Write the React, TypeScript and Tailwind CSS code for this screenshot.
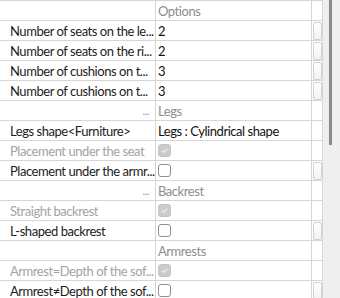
import React from 'react';

type Row =
  | { kind: 'header'; text: string; dots?: boolean }
  | { kind: 'value'; label: string; value: string; btn?: boolean }
  | { kind: 'check'; label: string; checked: boolean; disabled?: boolean; btn?: boolean };

const rows: Row[] = [
  { kind: 'header', text: 'Options' },
  { kind: 'value', label: 'Number of seats on the le...', value: '2', btn: true },
  { kind: 'value', label: 'Number of seats on the ri...', value: '2', btn: true },
  { kind: 'value', label: 'Number of cushions on t...', value: '3', btn: true },
  { kind: 'value', label: 'Number of cushions on t...', value: '3', btn: true },
  { kind: 'header', text: 'Legs', dots: true },
  { kind: 'value', label: 'Legs shape<Furniture>', value: 'Legs : Cylindrical shape' },
  { kind: 'check', label: 'Placement under the seat', checked: true, disabled: true },
  { kind: 'check', label: 'Placement under the armr...', checked: false, btn: true },
  { kind: 'header', text: 'Backrest', dots: true },
  { kind: 'check', label: 'Straight backrest', checked: true, disabled: true },
  { kind: 'check', label: 'L-shaped backrest', checked: false, btn: true },
  { kind: 'header', text: 'Armrests' },
  { kind: 'check', label: 'Armrest=Depth of the sof...', checked: true, disabled: true },
  { kind: 'check', label: 'Armrest\u2260Depth of the sof...', checked: false, btn: true },
];

function CheckBox({ checked, disabled }: { checked: boolean; disabled?: boolean }) {
  if (checked) {
    return (
      <span className="flex h-[13px] w-[13px] items-center justify-center rounded-[3px] border border-[#c4c4c4] bg-[#cbcbcb]">
        <svg width="9" height="9" viewBox="0 0 9 9">
          <path d="M1.8 4.6 L3.6 6.4 L7.2 2.6" fill="none" stroke="#eeeeee" strokeWidth="1.2" />
        </svg>
      </span>
    );
  }
  return (
    <span
      className={
        'block h-[13px] w-[13px] rounded-[3px] border bg-white ' +
        (disabled ? 'border-[#c4c4c4]' : 'border-[#8f8f8f]')
      }
    />
  );
}

function App() {
  return (
    <div
      className="flex h-[298px] w-[340px] overflow-hidden bg-white text-[13px] leading-[18px] tracking-[-0.45px]"
      style={{ fontFamily: 'Lato, "Noto Sans", sans-serif' }}
    >
      <div className="w-[323px] border-t border-[#d6d6d6]">
        {rows.map((r, i) => (
          <div key={i} className="flex h-[20px] border-b border-[#d6d6d6]">
            <div className="flex w-[156px] items-center whitespace-nowrap border-r border-[#d6d6d6] pl-[10px] pr-[2px]">
              {r.kind === 'header' ? (
                r.dots ? <span className="ml-auto pr-[4px] text-[11px] text-[#9a9a9a]">...</span> : null
              ) : (
                <span
                  className={
                    r.kind === 'check' && r.disabled ? 'text-[#a3a3a3]' : 'text-[#1c1c1c]'
                  }
                >
                  {r.label}
                </span>
              )}
            </div>
            <div className="flex w-[156px] items-center whitespace-nowrap border-r border-[#d6d6d6] pl-[2px]">
              {r.kind === 'header' && <span className="text-[#8e8e8e]">{r.text}</span>}
              {r.kind === 'value' && <span className="text-[#111111]">{r.value}</span>}
              {r.kind === 'check' && <CheckBox checked={r.checked} disabled={r.disabled} />}
            </div>
            <div className="flex w-[11px] items-center justify-center border-r border-[#d6d6d6]">
              {r.kind !== 'header' && r.btn && (
                <span className="block h-[18px] w-[9px] rounded-[2px] border border-[#d2d2d2] bg-gradient-to-b from-white to-[#f2f2f2]" />
              )}
            </div>
          </div>
        ))}
      </div>
      <div className="flex w-[17px] justify-center bg-[#efefef]">
        <div className="ml-[-2px] h-[145px] w-[3px] bg-[#8a8a8a]" />
      </div>
    </div>
  );
}

export default App;
